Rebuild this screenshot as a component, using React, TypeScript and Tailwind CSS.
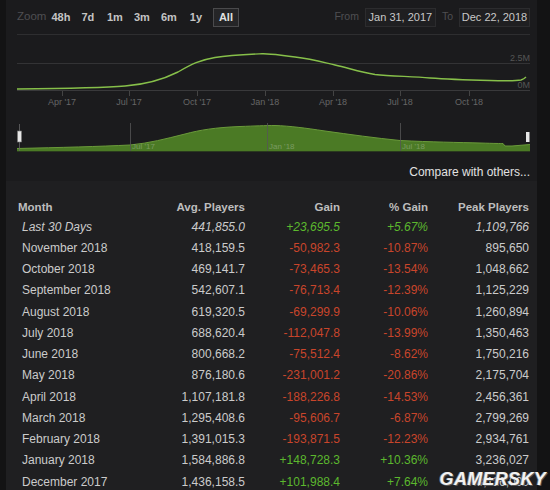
import React from 'react';

type Row = {
  month: string;
  avg: string;
  gain: string;
  pct: string;
  peak: string;
  italic?: boolean;
};

const rows: Row[] = [
  { month: 'Last 30 Days', avg: '441,855.0', gain: '+23,695.5', pct: '+5.67%', peak: '1,109,766', italic: true },
  { month: 'November 2018', avg: '418,159.5', gain: '-50,982.3', pct: '-10.87%', peak: '895,650' },
  { month: 'October 2018', avg: '469,141.7', gain: '-73,465.3', pct: '-13.54%', peak: '1,048,662' },
  { month: 'September 2018', avg: '542,607.1', gain: '-76,713.4', pct: '-12.39%', peak: '1,125,229' },
  { month: 'August 2018', avg: '619,320.5', gain: '-69,299.9', pct: '-10.06%', peak: '1,260,894' },
  { month: 'July 2018', avg: '688,620.4', gain: '-112,047.8', pct: '-13.99%', peak: '1,350,463' },
  { month: 'June 2018', avg: '800,668.2', gain: '-75,512.4', pct: '-8.62%', peak: '1,750,216' },
  { month: 'May 2018', avg: '876,180.6', gain: '-231,001.2', pct: '-20.86%', peak: '2,175,704' },
  { month: 'April 2018', avg: '1,107,181.8', gain: '-188,226.8', pct: '-14.53%', peak: '2,456,361' },
  { month: 'March 2018', avg: '1,295,408.6', gain: '-95,606.7', pct: '-6.87%', peak: '2,799,269' },
  { month: 'February 2018', avg: '1,391,015.3', gain: '-193,871.5', pct: '-12.23%', peak: '2,934,761' },
  { month: 'January 2018', avg: '1,584,886.8', gain: '+148,728.3', pct: '+10.36%', peak: '3,236,027' },
  { month: 'December 2017', avg: '1,436,158.5', gain: '+101,988.4', pct: '+7.64%', peak: '3,116,000' },
];

const zooms = ['48h', '7d', '1m', '3m', '6m', '1y'];

// main line, page coordinates
const linePath =
  'M17 89 C60 88.5 100 88 125 86 C145 84.5 160 81 178 72 C192 64 200 60 215 57.5 C230 55 245 54.5 262 53.8 C272 53.5 280 55.5 295 57 C312 59 322 62 335 65 C350 68.5 360 72 375 74.5 C390 76 410 76.5 430 78 C450 79.5 470 80 490 80.5 C505 81 515 81 521 80 C524 79 525 78 526 77';

const navTop =
  'M17 148.5 C60 147.5 100 146.5 130 145 C150 143 165 139 185 134 C200 130 215 127.5 240 126.5 C255 126 265 125.5 275 125.5 C290 126 305 128 325 131 C350 134.5 375 138 400 140.5 C430 142 460 142.5 480 143 C495 143.5 500 143.5 503 143.5 L505 146 L512 146 C518 145.5 524 145 530 144.5';

function Chart() {
  const ticks = [
    { x: 62, label: "Apr '17" },
    { x: 129, label: "Jul '17" },
    { x: 197, label: "Oct '17" },
    { x: 265, label: "Jan '18" },
    { x: 333, label: "Apr '18" },
    { x: 400, label: "Jul '18" },
    { x: 469, label: "Oct '18" },
  ];
  return (
    <svg width={531} height={123} viewBox="6 35 531 123" className="block">
      <line x1={17} y1={63.5} x2={530} y2={63.5} stroke="#333335" strokeWidth={1} />
      <line x1={17} y1={90.5} x2={530} y2={90.5} stroke="#39393b" strokeWidth={1} />
      <text x={530} y={61} fill="#555" fontSize={9} textAnchor="end" fontFamily="Liberation Sans, Arial, sans-serif">
        2.5M
      </text>
      <text x={530} y={88} fill="#555" fontSize={9} textAnchor="end" fontFamily="Liberation Sans, Arial, sans-serif">
        0M
      </text>
      {ticks.map((t) => (
        <g key={t.x}>
          <line x1={t.x + 0.5} y1={91} x2={t.x + 0.5} y2={96} stroke="#444" strokeWidth={1} />
          <text
            x={t.x}
            y={105}
            fill="#666"
            fontSize={9}
            textAnchor="middle"
            fontFamily="Liberation Sans, Arial, sans-serif"
          >
            {t.label}
          </text>
        </g>
      ))}
      <path d={linePath} fill="none" stroke="#87c04a" strokeWidth={1.4} />

      {/* navigator */}
      <path d={`${navTop} L530 151 L17 151 Z`} fill="#4b7a25" />
      <path d={navTop} fill="none" stroke="#6a9a3a" strokeWidth={1} />
      <line x1={17} y1={151.5} x2={530} y2={151.5} stroke="#2a3a1e" strokeWidth={1} />
      {[130, 267, 400].map((x) => (
        <line key={x} x1={x + 0.5} y1={123} x2={x + 0.5} y2={151} stroke="#555" strokeWidth={0.8} />
      ))}
      {[
        { x: 132, label: "Jul '17" },
        { x: 269, label: "Jan '18" },
        { x: 402, label: "Jul '18" },
      ].map((t) => (
        <text key={t.x} x={t.x} y={149} fill="#7a9a62" fontSize={8} fontFamily="Liberation Sans, Arial, sans-serif">
          {t.label}
        </text>
      ))}
      <line x1={19.5} y1={124} x2={19.5} y2={151} stroke="#666" strokeWidth={0.8} />
      <rect x={17.5} y={131} width={4} height={11} fill="#e6e6e6" stroke="#777" strokeWidth={0.6} />
      <rect x={526} y={132} width={3.5} height={10} fill="#e6e6e6" />
    </svg>
  );
}

function gainColor(v: string) {
  return v.startsWith('+') ? 'text-[#5cb82e]' : 'text-[#c9452b]';
}

export default function App() {
  return (
    <div
      className="w-[550px] h-[490px] overflow-hidden bg-[#131314] flex relative"
      style={{ fontFamily: '"Liberation Sans", Arial, sans-serif' }}
    >
      <div className="ml-[6px] w-[531px] flex flex-col">
        {/* top chart panel */}
        <div className="bg-[#1b1b1d] h-[183px] flex flex-col">
          <div className="h-[34px] flex items-center pl-[11px] pr-[7px]">
            <span className="text-[11.5px] text-[#4f4f52] mr-[1px]">Zoom</span>
            {zooms.map((z) => (
              <span key={z} className="text-[11px] font-bold text-[#c4c4c4] w-[27px] text-center">
                {z}
              </span>
            ))}
            <span className="ml-[3.5px] h-[19px] px-[5px] flex items-center border border-[#4a4a4c] bg-[#252527] text-[11px] font-bold text-[#e0e0e0]">
              All
            </span>
            <span className="ml-auto text-[10.5px] text-[#4f4f52] mr-[6px]">From</span>
            <span className="h-[19px] w-[71px] flex items-center justify-center bg-[#1f1f21] border border-[#2c2c2e] text-[11px] text-[#c8c8c8]">
              Jan 31, 2017
            </span>
            <span className="text-[10.5px] text-[#4f4f52] mx-[6px]">To</span>
            <span className="h-[19px] w-[71px] flex items-center justify-center bg-[#1f1f21] border border-[#2c2c2e] text-[11px] text-[#c8c8c8]">
              Dec 22, 2018
            </span>
          </div>
          <div className="mx-[11px] mr-[7px] border-b border-[#2e2e30]" />
          <Chart />
          <div className="flex-1 flex items-center justify-end pr-[7px] pt-[5px]">
            <span className="text-[12px] text-[#e2e2e2]">Compare with others...</span>
          </div>
        </div>

        {/* table panel */}
        <div className="flex-1 bg-[#1f1f21] pt-[18px] text-[12px]">
          <div className="grid grid-cols-[142px_85px_95px_88px_101px] pl-[12px] h-[17px] items-center font-bold text-[11.5px] text-[#bdbdbd]">
            <span>Month</span>
            <span className="text-right">Avg. Players</span>
            <span className="text-right">Gain</span>
            <span className="text-right">% Gain</span>
            <span className="text-right">Peak Players</span>
          </div>
          {rows.map((r) => (
            <div
              key={r.month}
              className={`grid grid-cols-[142px_85px_95px_88px_101px] pl-[12px] h-[21.25px] items-center text-[#cbcbcb] ${
                r.italic ? 'italic' : ''
              }`}
            >
              <span className="pl-[4px]">{r.month}</span>
              <span className="text-right">{r.avg}</span>
              <span className={`text-right ${gainColor(r.gain)}`}>{r.gain}</span>
              <span className={`text-right ${gainColor(r.pct)}`}>{r.pct}</span>
              <span className="text-right">{r.peak}</span>
            </div>
          ))}
        </div>
      </div>

      {/* watermark */}
      <span
        className="absolute right-[4px] bottom-[2px] text-[18px] leading-none font-black italic tracking-[0.3px] text-[#f2f2f2]"
        style={{ textShadow: '1px 1px 0 #555, -1px 0 0 #777' }}
      >
        GAMERSKY
      </span>
    </div>
  );
}
